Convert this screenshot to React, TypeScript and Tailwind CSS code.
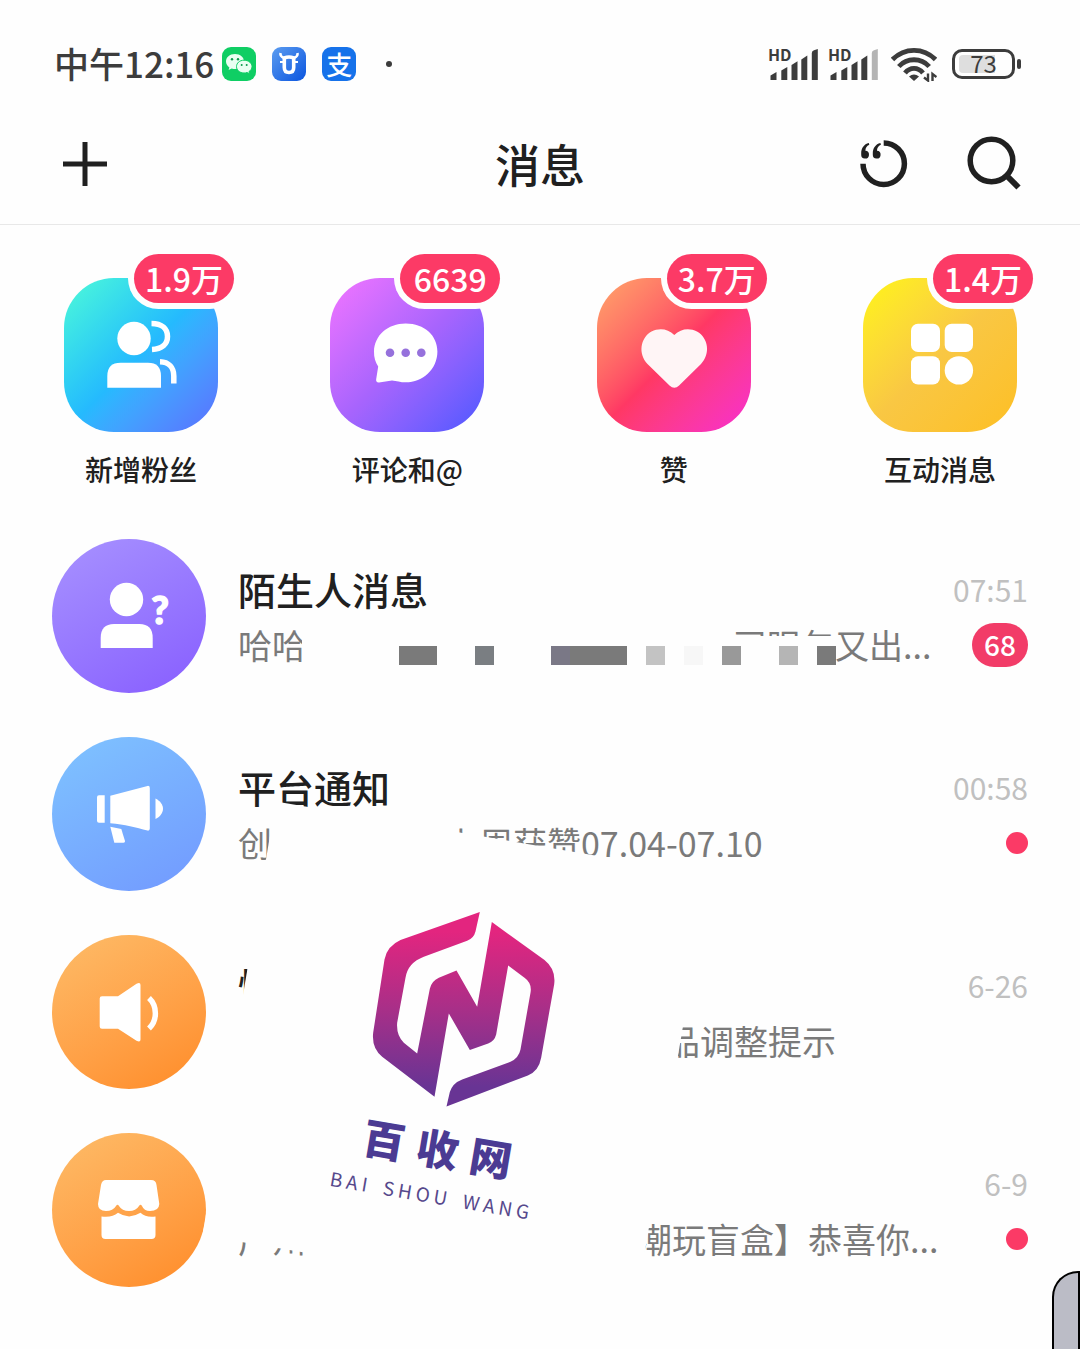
import React from 'react';

interface Shortcut {
  label: string;
  count: string;
  tile: string;
  icon: React.ReactNode;
}

interface Conversation {
  id: string;
  name: string;
  time: string;
  avatar: string;
  icon: React.ReactNode;
  preview: React.ReactNode;
  unread?: number;
  dot?: boolean;
}

const FansIcon = () => (
  <svg viewBox="0 0 154 154" className="size-full" fill="#fff">
    <circle cx="70" cy="60.5" r="16.7" />
    <path d="M43.3 109.7V98Q43.3 84.7 56.6 84.7H84Q97 84.7 97 98V109.7Z" />
    <g fill="none" stroke="#fff" strokeWidth="5.5">
      <path d="M87.5 45.5C98 45.5 103.5 51 103.5 58.5S98 71 88 71.5" />
      <path d="M96 83.8C105 84 109.8 90 109.8 98V105.5" />
    </g>
  </svg>
);

const CommentIcon = () => (
  <svg viewBox="0 0 154 154" className="size-full" fill="#fff">
    <path d="M75.7 45.5C94.5 45.5 107.4 57.5 107.4 73.5C107.4 91 93 104.3 75.7 104.3C70.5 104.3 66.5 102.8 62 102.4L49 104.4Q45.6 104.6 46.2 101L48.2 88.5C45.5 84.5 43.8 79.5 44 73.5C44.4 57.5 57.5 45.5 75.7 45.5Z" />
    <g fill="#9671dc">
      <circle cx="60" cy="74.7" r="4.3" />
      <circle cx="75.7" cy="74.7" r="4.3" />
      <circle cx="91.3" cy="74.7" r="4.3" />
    </g>
  </svg>
);

const HeartIcon = () => (
  <svg viewBox="0 0 154 154" className="size-full" fill="#fff5f6">
    <path d="M77.3 57C71 50.5 62 49.5 54.5 53.5C43 60 41 76 50.5 86L72.5 107.5Q77.3 112 82.1 107.5L104 86C113.6 76 111.6 60 100 53.5C92.6 49.5 83.6 50.5 77.3 57Z" />
  </svg>
);

const GridIcon = () => (
  <svg viewBox="0 0 154 154" className="size-full" fill="#fff">
    <rect x="48" y="45.7" width="29" height="28.3" rx="7" />
    <rect x="81.7" y="45.7" width="28.3" height="28.3" rx="7" />
    <rect x="48" y="78.3" width="29" height="28.3" rx="7" />
    <circle cx="95.9" cy="92.4" r="14.2" />
  </svg>
);

const StrangerIcon = () => (
  <svg viewBox="0 0 154 154" className="size-full" fill="#fff">
    <circle cx="74.5" cy="60.5" r="16.7" />
    <path d="M48.7 109V99Q48.7 85 62 85H87.5Q100.7 85 100.7 99V109Z" />
    <text x="108" y="85" textAnchor="middle" fontSize="38" fontWeight="900" stroke="#fff" strokeWidth="1.4" fontFamily="Lato, sans-serif">?</text>
  </svg>
);

const MegaphoneIcon = () => (
  <svg viewBox="0 0 154 154" className="size-full" fill="#fff">
    <path d="M47 58.3H52.7V85.7H47Q45 85.7 45 83.7V60.3Q45 58.3 47 58.3Z" />
    <path d="M58.3 58.7L95.5 48.9Q97.8 48.6 97.8 51V91.5Q97.8 94 95.5 93.6C84 90.5 73 87.5 58.3 86.3Z" />
    <path d="M103.5 61.5C108.5 64 111 68 111 71.7S108.5 79.5 103.5 82Z" />
    <path d="M58.3 89.8L69.3 92L73 104Q73.3 105.8 71.5 105.8H62.3Z" />
  </svg>
);

const SpeakerIcon = () => (
  <svg viewBox="0 0 154 154" className="size-full" fill="#fff">
    <path d="M50 61.3H66L84.5 48.8Q88.5 46.8 88.5 50V104.5Q88.5 107.6 84.5 105.7L66 93.7H50Q47.7 93.7 47.7 91.4V63.6Q47.7 61.3 50 61.3Z" />
    <path d="M97 63C105.5 71 105.5 85.5 97 93.5" fill="none" stroke="#fff" strokeWidth="5.5" />
  </svg>
);

const ShopIcon = () => (
  <svg viewBox="0 0 154 154" className="size-full" fill="#fff">
    <path d="M54 47H99Q104 47 104.5 52L107.3 71Q107 78 98 78Q92 78 90 73Q88.5 70.5 87 73Q84 78 77 78Q70 78 67 73Q65.5 70.5 64 73Q61 78 54 78Q46 78 46 71L49 52Q50 47 54 47Z" />
    <path d="M49.5 83.5Q60 85 66 79.8Q77 87 88.5 79.8Q94 85 103.5 83.5V102Q103.5 106 99.5 106H53.5Q49.5 106 49.5 102Z" />
  </svg>
);

const SignalIcon = ({ weak }: { weak?: boolean }) => (
  <div className="relative h-9 w-[50px]">
    <span className="absolute left-0 top-0 text-base leading-none font-bold">HD</span>
    <svg viewBox="0 0 50 36" className="size-full" fill="currentColor">
      <path d="M2.5 29.5L8.5 26V34H2.5Z" />
      <path d="M13.3 24.5L19.3 21V34H13.3Z" />
      <path d="M23.5 19L29.5 15.3V34H23.5Z" />
      <path d="M33.3 13.5L39.3 9.5V34H33.3Z" />
      <path d="M43.8 7Q43.8 5 46 4.2L49.8 3V34H43.8Z" className={weak ? 'text-[#b4b4b4]' : ''} />
    </svg>
  </div>
);

const WifiIcon = () => (
  <svg viewBox="0 0 46 36" className="h-9 w-[46px]" fill="none" stroke="currentColor" strokeWidth="4.8">
    <path d="M1.5 13.5C13.5 1.2 32.5 1.2 44.5 13.5" />
    <path d="M7.8 20.5C16 11.5 30 11.5 38.2 20.5" />
    <path d="M14 27C19 20.8 27 20.8 32 27" />
    <path d="M18 30.5Q23 26.5 28 30.5L23 35Z" fill="currentColor" stroke="none" />
    <path d="M37 27.5V34.5L33 31.5M41.5 35V28L45.5 31" strokeWidth="2.4" />
  </svg>
);

const WechatIcon = () => (
  <svg viewBox="0 0 34 34" className="size-[34px]">
    <rect width="34" height="34" rx="9" fill="#0fce64" />
    <path d="M13 7C7.6 7 4 10.3 4 14.5C4 16.9 5.3 19 7.4 20.4L6.6 23L9.7 21.5Q11.5 22 13.5 22C18.6 22 22 18.6 22 14.5S18.4 7 13 7Z" fill="#e9fff2" />
    <path d="M22 13.2C17.6 13.2 14.5 16.1 14.5 19.6S17.6 26 22 26Q23.6 26 25 25.5L27.5 26.8L27 24.5C29 23.3 30 21.6 30 19.6C30 16.1 26.6 13.2 22 13.2Z" fill="#e9fff2" stroke="#0fce64" strokeWidth="1" />
    <g fill="#0a9b4c">
      <circle cx="10" cy="12.3" r="1.2" />
      <circle cx="16" cy="12.3" r="1.2" />
      <circle cx="19.7" cy="18" r="1" />
      <circle cx="24.7" cy="18" r="1" />
    </g>
  </svg>
);

const BullIcon = () => (
  <svg viewBox="0 0 34 34" className="size-[34px]">
    <defs>
      <linearGradient id="bull" x1="0" y1="0" x2="1" y2="1">
        <stop offset="0" stopColor="#5b9cf0" />
        <stop offset="1" stopColor="#0b55df" />
      </linearGradient>
    </defs>
    <rect width="34" height="34" rx="9" fill="url(#bull)" />
    <path d="M8.5 6Q8 9.5 12 11M25.5 6Q26 9.5 22 11" fill="none" stroke="#fff" strokeWidth="2.6" />
    <path d="M12.3 11V20.5Q12.3 25.5 17 25.5T21.7 20.5V11Q17 9 12.3 11Z" fill="none" stroke="#fff" strokeWidth="3.6" />
    <path d="M8 15H12M22 15H26" stroke="#fff" strokeWidth="2" />
  </svg>
);

const AlipayIcon = () => (
  <span className="flex size-[34px] items-center justify-center rounded-[9px] bg-[#1672ea] text-[26px] leading-none font-medium text-white">支</span>
);

const QuoteCircleIcon = () => (
  <svg viewBox="0 0 52 52" className="size-[52px]" fill="currentColor">
    <path d="M25.7 5A20.7 20.7 0 1 1 5 25.7" fill="none" stroke="currentColor" strokeWidth="5.5" />
    <path d="M3.2 15.5C3.2 10 6 6.2 10.8 5L11.3 6.8C8.6 8 7.4 10 7.4 12.8A3.9 3.9 0 1 1 3.2 16.5Z" />
    <path d="M14.8 15.5C14.8 10 17.6 6.2 22.4 5L22.9 6.8C20.2 8 19 10 19 12.8A3.9 3.9 0 1 1 14.8 16.5Z" />
  </svg>
);

const SearchIcon = () => (
  <svg viewBox="0 0 56 56" className="size-14" fill="none" stroke="currentColor">
    <circle cx="25.5" cy="24.5" r="21.3" strokeWidth="5.5" />
    <path d="M40 39L52.5 51.5" strokeWidth="6" />
  </svg>
);

const PlusIcon = () => (
  <svg viewBox="0 0 44 44" className="size-11" stroke="currentColor" strokeWidth="5">
    <path d="M22 0V44M0 22H44" />
  </svg>
);

const shortcuts: Shortcut[] = [
  { label: '新增粉丝', count: '1.9万', tile: 'bg-linear-135 from-[#4ffbd6] via-[#25bafe] to-[#5a6dff]', icon: <FansIcon /> },
  { label: '评论和@', count: '6639', tile: 'bg-linear-135 from-[#f374ff] via-[#a864fd] to-[#4b57ff]', icon: <CommentIcon /> },
  { label: '赞', count: '3.7万', tile: 'bg-linear-135 from-[#ffa569] via-[#ff3864] to-[#f82bd0]', icon: <HeartIcon /> },
  { label: '互动消息', count: '1.4万', tile: 'bg-linear-135 from-[#fff50c] via-[#f9c743] to-[#fdbf22]', icon: <GridIcon /> },
];

// Censor blocks over the first preview, one colour per 19px cell
const mosaic = [
  'bg-[#7a7a7a]', 'bg-[#7a7a7a]', '', '', 'bg-[#7a7e82]', '', '', '', 'bg-[#7a7886]', 'bg-[#7a7a7a]',
  'bg-[#7a7a7a]', 'bg-[#7a7a7a]', '', 'bg-[#c3c3c3]', '', 'bg-[#f7f7f7]', '', 'bg-[#999999]', '', '',
  'bg-[#b5b5b5]', '', 'bg-[#7a7a7a]',
];

const conversations: Conversation[] = [
  {
    id: 'stranger',
    name: '陌生人消息',
    time: '07:51',
    avatar: 'bg-linear-150 from-[#a892ff] to-[#885cff]',
    icon: <StrangerIcon />,
    unread: 68,
    preview: (
      <>
        <span>哈哈</span>
        <span className="ml-[427px]">司眼包又出...</span>
        <span className="absolute left-[64px] top-[18px] flex h-[29px] w-[534px] items-end bg-[#fefefe] pl-[97px]">
          {mosaic.map((color, i) => (
            <span key={i} className={`h-[19px] w-[19px] ${color}`} />
          ))}
        </span>
      </>
    ),
  },
  {
    id: 'platform',
    name: '平台通知',
    time: '00:58',
    avatar: 'bg-linear-150 from-[#7fc4ff] to-[#7298ff]',
    icon: <MegaphoneIcon />,
    dot: true,
    preview: (
      <>
        <span>创</span>
        <span className="ml-[173px]">上周获赞07.04-07.10</span>
      </>
    ),
  },
  {
    id: 'notice',
    name: '快',
    time: '6-26',
    avatar: 'bg-linear-150 from-[#fdbc68] to-[#ff8b25]',
    icon: <SpeakerIcon />,
    preview: <span className="ml-[428px]">品调整提示</span>,
  },
  {
    id: 'shop',
    name: '店',
    time: '6-9',
    avatar: 'bg-linear-150 from-[#fdbc68] to-[#ff8b25]',
    icon: <ShopIcon />,
    dot: true,
    preview: (
      <>
        <span>广州</span>
        <span className="ml-[332px]">潮玩盲盒】恭喜你...</span>
      </>
    ),
  },
];

const StatusBar = () => (
  <div className="flex h-32 items-center justify-between pl-[54px] pr-[59px] text-[#3c3c3c]">
    <div className="flex items-center">
      <span className="pb-1 text-[35px] leading-none font-medium">中午12:16</span>
      <div className="ml-2 flex items-center gap-4">
        <WechatIcon />
        <BullIcon />
        <AlipayIcon />
      </div>
      <span className="ml-[30px] size-[6px] rounded-full bg-[#3c3c3c]" />
    </div>
    <div className="flex items-center">
      <SignalIcon />
      <div className="ml-[10px]">
        <SignalIcon weak />
      </div>
      <div className="ml-[13px]">
        <WifiIcon />
      </div>
      <div className="ml-[15px] flex items-center gap-[2px]">
        <div className="relative flex h-[30px] w-[63px] items-center justify-center rounded-[10px] border-3 border-[#3c3c3c]">
          <span className="absolute inset-y-[3px] left-1 w-[36px] rounded-l-sm bg-[#dedede]" />
          <span className="relative pb-[2px] text-2xl leading-none">73</span>
        </div>
        <span className="h-[10px] w-1 rounded-sm bg-[#3c3c3c]" />
      </div>
    </div>
  </div>
);

const WatermarkCard = () => (
  <div className="pointer-events-none absolute left-[236px] top-[296px] flex h-[440px] w-[439px] rotate-[9.6deg] flex-col items-center bg-[#fefefe] pt-[68px]">
    <svg viewBox="130 13 600 630" className="h-[210px] w-[200px] overflow-visible">
      <defs>
        <linearGradient id="brand" x1="0" y1="0" x2="0" y2="1">
          <stop offset="0.1" stopColor="#e3257f" />
          <stop offset="0.5" stopColor="#a82f88" />
          <stop offset="0.9" stopColor="#683494" />
        </linearGradient>
      </defs>
      <path
        transform="rotate(-9.6 430 328)"
        fill="url(#brand)"
        d="M478 38L465 96Q460 116 440 124L310 172Q262 190 255 235L230 370Q227 408 250 430L290 462L328 268Q333 245 355 235L408 213L470 322L514 68L672 182Q707 210 701 255L662 475Q655 515 622 528L378 621L388 578Q396 551 425 540L570 487Q595 475 600 450L630 280Q635 252 613 236L563 198L527 405Q522 425 503 432L448 452L385 342L342 592L185 472Q153 446 158 400L192 180Q200 140 240 122Z"
      />
    </svg>
    <div className="mt-4 flex gap-3 pr-1 text-[42px] leading-10 font-black text-[#4b3b93]">
      <span>百</span>
      <span>收</span>
      <span>网</span>
    </div>
    <div className="mt-4 flex gap-3 text-[19px] leading-6 tracking-[4px] text-[#56498c]">
      <span>BAI</span>
      <span>SHOU</span>
      <span>WANG</span>
    </div>
  </div>
);

const App: React.FC = () => {
  return (
    <div className="relative min-h-screen overflow-hidden bg-[#fefefe] font-['Noto_Sans_CJK_SC',sans-serif] text-[#202020]">
      <StatusBar />

      <header className="grid grid-cols-3 items-center border-b border-[#e8e8e8] px-[58px] pb-[24px]">
        <button type="button" aria-label="添加" className="justify-self-start pl-[5px]">
          <PlusIcon />
        </button>
        <h1 className="text-center text-[45px] leading-[72px] font-medium">消息</h1>
        <div className="flex items-center gap-14 justify-self-end">
          <button type="button" aria-label="状态">
            <QuoteCircleIcon />
          </button>
          <button type="button" aria-label="搜索">
            <SearchIcon />
          </button>
        </div>
      </header>

      <nav className="flex justify-between pl-16 pr-[63px] pt-[53px]">
        {shortcuts.map((s) => (
          <a key={s.label} href="#" className="flex w-[154px] flex-col items-center">
            <div className={`relative size-[154px] rounded-[50px] ${s.tile}`}>
              {s.icon}
              <span className="absolute -right-4 -top-6 flex h-[49px] min-w-[100px] items-center justify-center rounded-full bg-[#fc3a66] px-2 pb-[2px] text-[32px] leading-none font-medium text-white ring-6 ring-[#fefefe]">
                {s.count}
              </span>
            </div>
            <span className="mt-4 text-[28px] leading-[42px] font-medium whitespace-nowrap">{s.label}</span>
          </a>
        ))}
      </nav>

      <main className="relative mt-[49px]">
        <ul className="flex flex-col gap-11 px-[52px]">
          {conversations.map((c) => (
            <li key={c.id}>
              <a href="#" className="flex items-center gap-8">
                <div className={`size-[154px] shrink-0 rounded-full ${c.avatar}`}>{c.icon}</div>
                <div className="flex min-w-0 flex-1 flex-col gap-0.5 pt-0.5">
                  <div className="flex h-[54px] items-center justify-between">
                    <span className="text-[38px] leading-[54px] font-medium">{c.name}</span>
                    <span className="text-[30px] leading-[54px] text-[#c0c0c0]">{c.time}</span>
                  </div>
                  <div className="flex h-[54px] items-center justify-between">
                    <div className="relative flex text-[34px] leading-[54px] whitespace-nowrap text-[#7a7a7a]">{c.preview}</div>
                    {c.unread && (
                      <span className="flex h-11 w-14 items-center justify-center rounded-full bg-[#f23c68] pb-[2px] text-[28px] leading-none font-medium text-white">
                        {c.unread}
                      </span>
                    )}
                    {c.dot && <span className="size-[22px] rounded-full bg-[#fb3a66]" />}
                  </div>
                </div>
              </a>
            </li>
          ))}
        </ul>
        <WatermarkCard />
      </main>

      <div className="fixed bottom-0 right-0 h-[78px] w-7 rounded-tl-[26px] border-2 border-b-0 border-black bg-[#bbbcc6]" />
    </div>
  );
};

export default App;
